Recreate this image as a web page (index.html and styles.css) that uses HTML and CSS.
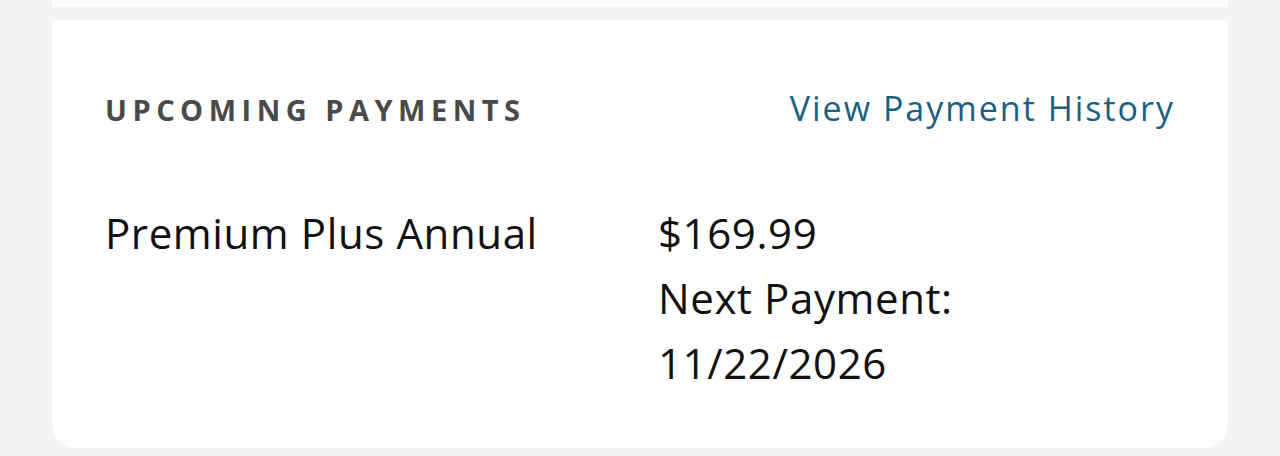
FILE: index.html
```html
<!DOCTYPE html>
<html lang="en">
<head>
<meta charset="utf-8">
<title>Upcoming Payments</title>
<link rel="stylesheet" href="styles.css">
</head>
<body>
<div class="page">
  <div class="card card--prev"></div>
  <section class="card card--payments">
    <header class="payments-header">
      <h2 class="payments-title">UPCOMING PAYMENTS</h2>
      <a class="payments-link" href="#">View Payment History</a>
    </header>
    <div class="payment-row">
      <div class="payment-name">Premium Plus Annual</div>
      <div class="payment-details">
        <div class="payment-amount">$169.99</div>
        <div class="payment-next">Next Payment:</div>
        <div class="payment-date">11/22/2026</div>
      </div>
    </div>
  </section>
</div>
</body>
</html>
```

FILE: styles.css
```css
html, body {
  margin: 0;
  padding: 0;
  background: #f4f4f4;
  font-family: "Open Sans", "Noto Sans", sans-serif;
}

.page {
  display: flex;
  flex-direction: column;
  gap: 13px;
  padding: 0 52px;
}

.card {
  background: #ffffff;
}

.card--prev {
  height: 7px;
}

.card--payments {
  height: 428px;
  box-sizing: border-box;
  border-radius: 0 0 24px 24px;
  padding: 66px 53px 0 53px;
}

.payments-header {
  display: flex;
  justify-content: space-between;
  align-items: baseline;
  height: 44px;
}

.payments-title {
  margin: 0;
  font-size: 29px;
  font-weight: 700;
  letter-spacing: 5.5px;
  color: #4a4a4a;
  line-height: 44px;
}

.payments-link {
  font-size: 34px;
  letter-spacing: 2px;
  color: #1c5f80;
  text-decoration: none;
  line-height: 44px;
}

.payment-row {
  display: grid;
  grid-template-columns: 553px 1fr;
  margin-top: 70px;
  color: #111111;
  font-size: 42px;
  letter-spacing: 0.6px;
  line-height: 65px;
}
```
